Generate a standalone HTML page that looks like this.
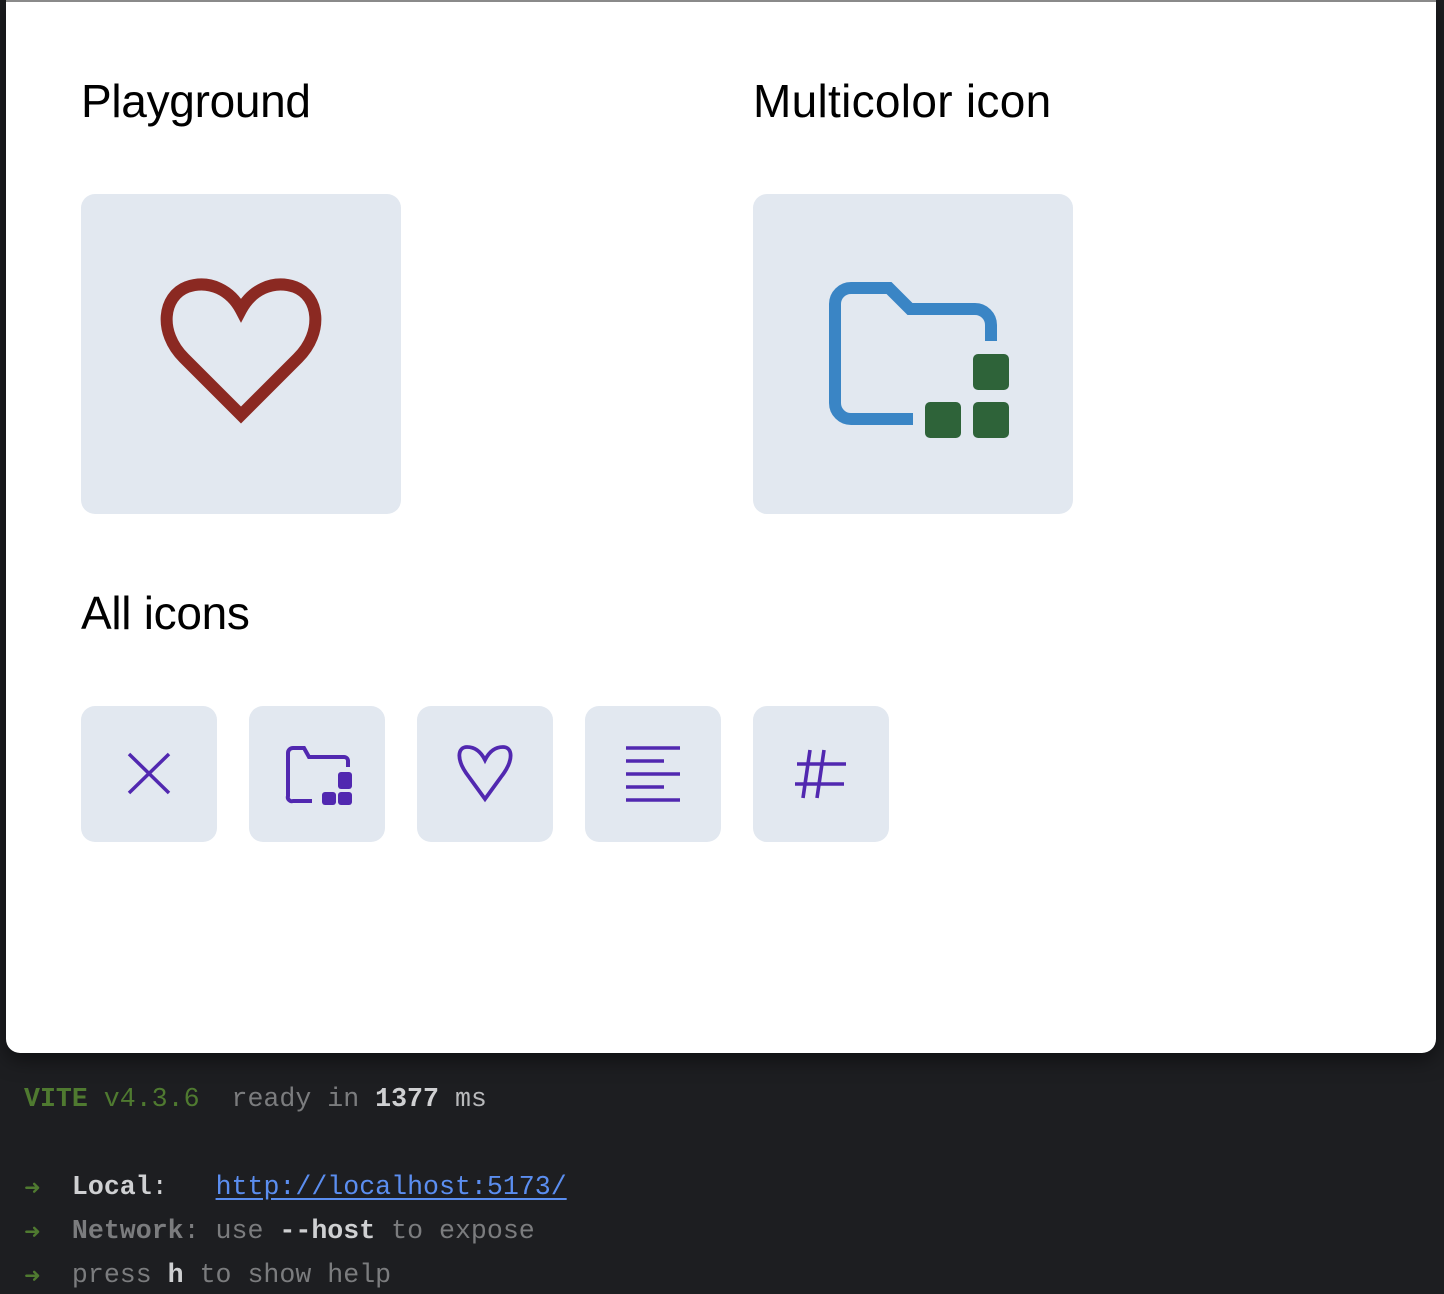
<!DOCTYPE html>
<html><head><meta charset="utf-8"><style>
html,body{margin:0;padding:0;width:1444px;height:1294px;overflow:hidden;background:#1d1e21;}
body{position:relative;font-family:"Liberation Sans",sans-serif;}
.panel{position:absolute;left:6px;top:0;width:1430px;height:1053px;background:#fff;border-radius:0 0 14px 14px;border-top:2px solid #8a8a8a;box-sizing:border-box;box-shadow:0 6px 20px rgba(0,0,0,.5);}
h2{position:absolute;margin:0;font-weight:400;font-size:46px;color:#000;line-height:1;letter-spacing:-0.3px}
.box{position:absolute;background:#e2e8f0;border-radius:14px;}
.term{position:absolute;left:24px;font-family:"Liberation Mono",monospace;font-size:26.6px;white-space:pre;color:#7b7c7e;line-height:44px;}
.g{color:#4f7a30}.b{font-weight:700;color:#cfd0d2}.l{color:#5b8ef0;text-decoration:underline;text-underline-offset:4px}
.ar{font-size:20px;display:inline-block;width:16px}
</style></head><body>
<div class="panel"></div>
<h2 style="left:81px;top:78px">Playground</h2>
<h2 style="left:753px;top:78px;letter-spacing:0.3px">Multicolor icon</h2>
<h2 style="left:81px;top:590px">All icons</h2>

<div class="box" style="left:81px;top:194px;width:320px;height:320px"></div>
<div class="box" style="left:753px;top:194px;width:320px;height:320px"></div>
<div class="box" style="left:81px;top:706px;width:136px;height:136px"></div>
<div class="box" style="left:249px;top:706px;width:136px;height:136px"></div>
<div class="box" style="left:417px;top:706px;width:136px;height:136px"></div>
<div class="box" style="left:585px;top:706px;width:136px;height:136px"></div>
<div class="box" style="left:753px;top:706px;width:136px;height:136px"></div>

<svg style="position:absolute;left:0;top:0" width="1444" height="1060">
<path d="M241 415 L184 358 C158 332 163 296 187 287 C210 279 231 291 241 310 C251 291 272 279 295 287 C319 296 324 332 298 358 Z" fill="none" stroke="#8b2922" stroke-width="12" stroke-linejoin="miter"/>
<path d="M913 419 H851 a16 16 0 0 1 -16 -16 V304 a16 16 0 0 1 16 -16 H889 L910 309 H975 a16 16 0 0 1 16 16 V341" fill="none" stroke="#3a85c5" stroke-width="12"/>
<rect x="973" y="354" width="36" height="36" rx="5" fill="#2e6339"/>
<rect x="925" y="402" width="36" height="36" rx="5" fill="#2e6339"/>
<rect x="973" y="402" width="36" height="36" rx="5" fill="#2e6339"/>
<g stroke="#5128b0" fill="none" stroke-width="3.5">
<path d="M129 754 L169 793 M169 754 L129 793"/>
<path d="M312 801 H293 a4 4 0 0 1 -5 -5 V753 a5 5 0 0 1 5 -5 H304 L309 757 H344 a4 4 0 0 1 4 4 V767" stroke-width="4"/>
<path d="M485 799 L469 777 C455 759 458 747 467 747 C475 747 481 752 485 760 C489 752 495 747 503 747 C512 747 515 759 501 777 Z" stroke-width="3.8"/>
<path d="M626 748 H680 M626 761 H664 M626 774 H680 M626 787 H664 M626 800 H680" stroke-width="3.6"/>
<path d="M810 750 L803 798 M824 750 L817 798 M797 764 H846 M795 784 H844" stroke-width="3.6"/>
</g>
<g fill="#5128b0">
<rect x="338" y="772" width="14" height="17" rx="3"/>
<rect x="322" y="792" width="14" height="13" rx="3"/>
<rect x="338" y="792" width="14" height="13" rx="3"/>
</g>
</svg>

<div class="term" style="top:1077px"><span class="g"><b>VITE</b> v4.3.6</span>  ready in <span class="b">1377</span> <span style="color:#b8b9bb">ms</span></div>
<div class="term" style="top:1165px"><span class="g ar">➜</span>  <span class="b">Local</span><span style="color:#cfd0d2">:</span>   <span class="l">http://localhost:5173/</span></div>
<div class="term" style="top:1209px"><span class="g ar">➜</span>  <b>Network</b>: use <span class="b">--host</span> to expose</div>
<div class="term" style="top:1253px"><span class="g ar">➜</span>  press <span class="b">h</span> to show help</div>
</body></html>
